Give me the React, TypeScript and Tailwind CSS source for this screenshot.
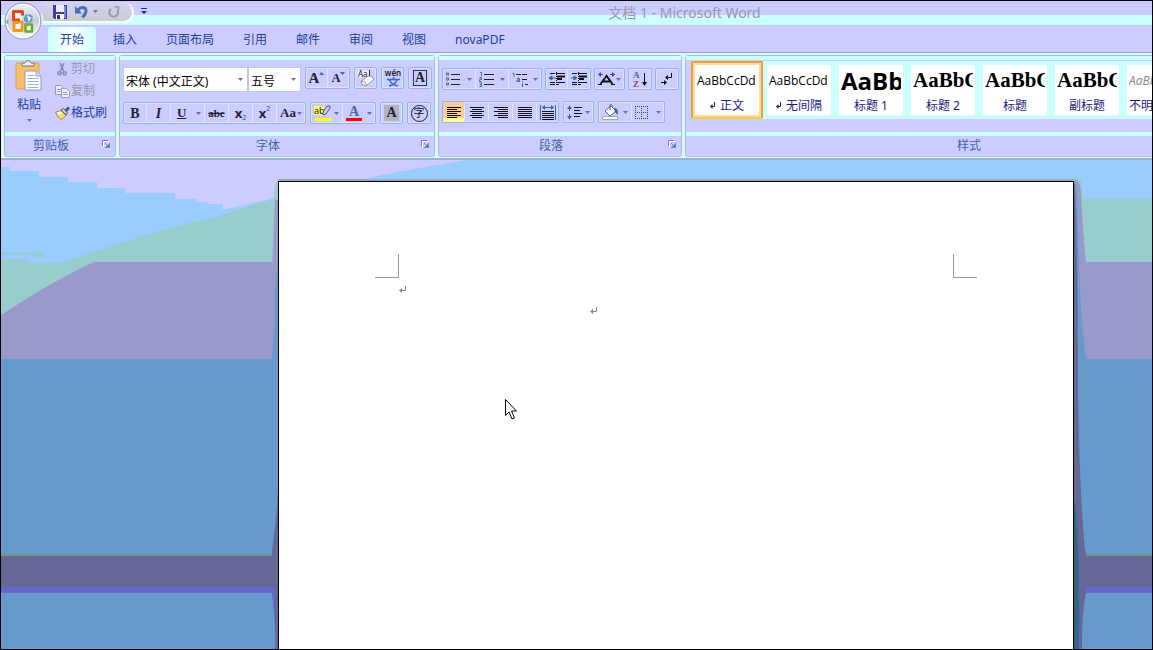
import React from 'react';

interface ToolProps {
  label: string;
  width: string;
  drop?: boolean;
  active?: boolean;
  children: React.ReactNode;
}

const Arrow = () => (
  <svg width="5" height="3" viewBox="0 0 5 3" className="shrink-0" aria-hidden="true">
    <path d="M0 0h5L2.500 3z" fill="#6672a8" />
  </svg>
);

const Tool: React.FC<ToolProps> = ({ label, width, drop, active, children }) => (
  <button
    type="button"
    aria-label={label}
    className={`flex h-full items-center ${width} ${
      active ? 'bg-linear-to-b from-[#ffcc99] from-80% to-[#ffff99] to-80%' : ''
    } ${drop ? 'justify-between px-[3px]' : 'justify-center'}`}
  >
    {children}
    {drop && <Arrow />}
  </button>
);

const ToolGroup: React.FC<{ children: React.ReactNode }> = ({ children }) => (
  <div className="flex h-[22px] shrink-0 divide-x divide-[#dde6ff] rounded-[2px] border border-[#99b3dd] shadow-[inset_0_0_0_1px_#d5e4ff]">
    {children}
  </div>
);

const Launcher: React.FC<{ label: string }> = ({ label }) => (
  <button type="button" aria-label={label} className="absolute top-[4px] right-[5px]">
    <svg width="8" height="8" viewBox="0 0 8 8" fill="none">
      <path d="M.5 6V.5H6" stroke="#6688bb" />
      <path d="M7.500 3v4.500H3M3 3l3 3" stroke="#6688bb" />
      <path d="M1.500 7V1.500H7" stroke="#fff" />
      <path d="M4 7l3-3v3z" fill="#557799" />
    </svg>
  </button>
);

interface PanelProps {
  title: string;
  width: string;
  launcher?: boolean;
  children: React.ReactNode;
}

const Panel: React.FC<PanelProps> = ({ title, width, launcher = true, children }) => (
  <section
    aria-label={title}
    className={`flex shrink-0 flex-col rounded-[3px] border border-[#a5bfdd] bg-[#ccccff] ${width}`}
  >
    <div className="h-[76px] border-t-4 border-[#ccffff]">{children}</div>
    <div
      className={`relative h-[24px] border-t-4 border-[#ccffff] text-center text-[12px] leading-[20px] text-[#3a66a8] ${
        launcher ? 'pr-[18px]' : ''
      }`}
    >
      {title}
      {launcher && <Launcher label={`${title}选项`} />}
    </div>
  </section>
);

/* ---------- icons ---------- */

const OfficeLogo = () => (
  <svg width="38" height="38" viewBox="0 0 38 38" className="block">
    <defs>
      <linearGradient id="orb" x1="0" y1="0" x2="0" y2="1">
        <stop offset="0" stopColor="#f2f2ff" />
        <stop offset=".5" stopColor="#ccccdd" />
        <stop offset="1" stopColor="#ffffff" />
      </linearGradient>
    </defs>
    <circle cx="19" cy="19" r="18" fill="url(#orb)" stroke="#8f9bb8" />
    <circle cx="19" cy="19" r="16.500" fill="none" stroke="#fff" />
    <path d="M9 9h9v9H9z" fill="#fff4ee" />
    <path d="M16 18H9.500V9.500H18.500v4" fill="none" stroke="#dd4a1c" strokeWidth="3" strokeLinejoin="round" />
    <path d="M21.500 13.500h6v6h-6z" fill="#eef6ff" stroke="#4488cc" strokeWidth="2" strokeDasharray="2 1" />
    <path d="M10 20.500h8v8h-8z" fill="#fff" stroke="#ee9a1c" strokeWidth="3" strokeLinejoin="round" />
    <path d="M14 21.500h3v3h-3z" fill="#fff" />
    <path d="M21.500 22.500h6.500v7h-6.500z" fill="#f4ffe8" stroke="#66aa33" strokeWidth="2.500" strokeLinejoin="round" />
    <path d="M20 15.500h4v3h-4z" fill="#5599dd" />
    <path d="M20 21.500h4v3h-4z" fill="#88aa44" />
    <path d="M2 20l2-3v5zM34 17h1M34 20h1" fill="#9999aa" stroke="#aaaabb" />
  </svg>
);

const SaveIcon = () => (
  <svg width="14" height="14" viewBox="0 0 14 14">
    <path d="M0 0h14v14H1.500L0 12.500z" fill="#3b3ba0" />
    <path d="M3 0h8v7H3z" fill="#e6eeff" />
    <path d="M11 1h2v12h-2z" fill="#7788cc" />
    <path d="M3 9h8v5H3z" fill="#fff" />
    <path d="M4 10h3v4H4z" fill="#333377" />
  </svg>
);

const UndoIcon = () => (
  <svg width="13" height="14" viewBox="0 0 13 14" fill="none">
    <path d="M3 5c3-4 8-3 8 1 0 3-2 4-3.500 6.500" stroke="#4a6cc0" strokeWidth="3" />
    <path d="M0 1v7.500h7z" fill="#4a6cc0" />
  </svg>
);

const RedoIcon = () => (
  <svg width="12" height="12" viewBox="0 0 12 12" fill="none" stroke="#9999aa" strokeWidth="2">
    <path d="M3 3a4.300 4.300 0 1 0 6.500 1.500" />
    <path d="M6.500 1h4v4" strokeWidth="1.500" />
  </svg>
);

const PasteIcon = () => (
  <svg width="28" height="31" viewBox="0 0 28 31">
    <rect x="1" y="3" width="23" height="26" rx="1.500" fill="#f9be68" stroke="#dd9f55" />
    <path d="M7 6V3h3c0-3 6-3 6 0h3v3z" fill="#eee" stroke="#777788" />
    <path d="M10 11h11l5 5v14H10z" fill="#fff" stroke="#8899bb" />
    <path d="M21 11v5h5" fill="#dde6ff" stroke="#8899bb" />
    <path d="M12.500 15.500h7M12.500 18.500h11M12.500 21.500h11M12.500 24.500h11M12.500 27.500h11" stroke="#99b0dd" />
  </svg>
);

const CutIcon = () => (
  <svg width="10" height="13" viewBox="0 0 10 13" fill="none" stroke="#7f88a8" strokeWidth="1.500">
    <path d="M3 0l3.500 8M7 0L3.500 8" />
    <circle cx="2.500" cy="10.300" r="1.600" />
    <circle cx="7.500" cy="10.300" r="1.600" />
  </svg>
);

const CopyIcon = () => (
  <svg width="15" height="13" viewBox="0 0 15 13" stroke="#9999bb">
    <path d="M.5.5h5l3 3v6h-8z" fill="#eeeeff" />
    <path d="M2 4.500h4M2 6.500h3" />
    <path d="M6.500 3.500h5l3 3v6h-8z" fill="#eeeeff" />
    <path d="M8 7.500h4M8 9.500h5" />
  </svg>
);

const BrushIcon = () => (
  <svg width="15" height="14" viewBox="0 0 15 14">
    <path d="M.5 6L6 4.500l5 5L6.500 13.500C4 12.500 1.500 9 .5 6z" fill="#f5e070" stroke="#998a4a" />
    <path d="M2 6.500l4-1 1.500 1.500-4 2z" fill="#ffffcc" />
    <path d="M6 4L8.500 2.500l4 4.500L11 9z" fill="#ccccd8" stroke="#555577" />
    <path d="M10 3.500L13 .5l2 1.500-3 4z" fill="#445588" />
  </svg>
);

const EraserIcon = () => (
  <svg width="17" height="18" viewBox="0 0 17 18">
    <path d="M.5 1.500h12v7H.5z" fill="#eef" />
    <text x="1" y="8" fontSize="8" fontFamily="Noto Sans" fill="#222">Aa</text>
    <path d="M12.500 1v6" stroke="#222" />
    <path d="M4 12.500L11 7l4 .5 1.500 3-7 6-4-.5z" fill="#fff" stroke="#8c99b4" />
    <path d="M4 12.500l4 .5 1.500 3" fill="none" stroke="#99a" />
  </svg>
);

const PhoneticIcon = () => (
  <svg width="20" height="20" viewBox="0 0 20 20">
    <text x="10" y="8" fontSize="8" fontWeight="600" textAnchor="middle" fontFamily="Noto Sans" fill="#222">wén</text>
    <path d="M10.500 9v2M4 11.500h13M6.500 12c1 3 4 5 8.500 6M14 12c-1 3-4 5-8 6" fill="none" stroke="#3b6cc0" strokeWidth="1.500" />
  </svg>
);

const BulletsIcon = () => (
  <svg width="14" height="14" viewBox="0 0 14 14">
    <path d="M.5 1h2v2h-2zM.5 6h2v2h-2zM.5 11h2v2h-2z" fill="#ccccff" stroke="#4a6a99" />
    <path d="M5 2.500h9M5 7.500h9M5 12.500h9" stroke="#222" />
  </svg>
);

const NumberingIcon = () => (
  <svg width="15" height="15" viewBox="0 0 15 15">
    <path d="M1 .5h1.500V4M.5 5.500h2v2h-2v2h2M.5 11h2v3.500h-2M1 12.700h1.500" fill="none" stroke="#4a6a99" />
    <path d="M5 2.500h10M5 7.500h10M5 12.500h10" stroke="#222" />
  </svg>
);

const MultilevelIcon = () => (
  <svg width="18" height="15" viewBox="0 0 18 15">
    <path d="M.5 1.500H2V5M5 6.500h2.500v3H5V8h2M10.500 11v4M10.500 9v1" fill="none" stroke="#4a6a99" />
    <path d="M4 2.500h12M10 7.500h6M13 12.500h3" stroke="#222" strokeDasharray="5 1" />
  </svg>
);

const IndentIcon = ({ flip }: { flip?: boolean }) => (
  <svg width="16" height="14" viewBox="0 0 16 14">
    <path d="M1 1.500h15M1 10.500h15M1 12.500h9" stroke="#111" strokeDasharray="5 1 9 1" />
    <path d="M8 4.500h8M8 7h5" stroke="#111" strokeWidth="2" />
    <path d="M7.500 0v14" stroke="#111" strokeDasharray="1 1" />
    <path d={flip ? 'M0 6h3M3 4L6 6 3 8z' : 'M3 6h4M3 4L0 6l3 2z'} fill="#336699" stroke="#336699" />
  </svg>
);

const ScaleIcon = () => (
  <svg width="17" height="14" viewBox="0 0 17 14" fill="none">
    <path d="M0 12.500h4M13 12.500h4" stroke="#111" />
    <path d="M2.500 12L8.500 4l6 8M5 9.500h7" stroke="#111" strokeWidth="2" />
    <path d="M1 2.500h4M12 2.500h4" stroke="#3344aa" />
    <path d="M3 0L0 2.500 3 5zM14 0l3 2.500L14 5z" fill="#3344aa" />
  </svg>
);

const SortIcon = () => (
  <svg width="15" height="18" viewBox="0 0 15 18">
    <text x="0" y="8" fontSize="9" fontWeight="bold" fontFamily="Liberation Serif" fill="#4466aa">A</text>
    <text x="0" y="17" fontSize="9" fontWeight="bold" fontFamily="Liberation Serif" fill="#aa4444">Z</text>
    <path d="M11.500 3v11" stroke="#111" />
    <path d="M9 12h5l-2.500 4z" fill="#111" />
  </svg>
);

const MarksIcon = () => (
  <svg width="12" height="13" viewBox="0 0 12 13">
    <path d="M10.500 0v4.500H6M0 9.500h5" fill="none" stroke="#111" />
    <path d="M7 2v5L4 4.500zM3 7v5l3-2.500z" fill="#111" />
  </svg>
);

const alignPaths = {
  left: 'M0 .5h14M0 2.500h10M0 4.500h14M0 6.500h10M0 8.500h14M0 10.500h10',
  center: 'M0 .5h14M2 2.500h10M0 4.500h14M2 6.500h10M0 8.500h14M2 10.500h10',
  right: 'M0 .5h14M4 2.500h10M0 4.500h14M4 6.500h10M0 8.500h14M4 10.500h10',
  justify: 'M0 .5h14M0 2.500h14M0 4.500h14M0 6.500h14M0 8.500h14M0 10.500h14',
};

const AlignIcon = ({ kind }: { kind: keyof typeof alignPaths }) => (
  <svg width="14" height="11" viewBox="0 0 14 11">
    <path d={alignPaths[kind]} stroke="#111" />
  </svg>
);

const DistributeIcon = () => (
  <svg width="16" height="15" viewBox="0 0 16 15">
    <path d="M.5 0v15M15.500 0v15M2 2.500h12" stroke="#336699" />
    <path d="M5 0v5L2 2.500zM11 0v5l3-2.500z" fill="#336699" />
    <path d="M2 6.500h12M2 8.500h12M2 10.500h12M2 12.500h12M2 14.500h12" stroke="#111" />
  </svg>
);

const SpacingIcon = () => (
  <svg width="15" height="15" viewBox="0 0 15 15">
    <path d="M2.500 2v4M2.500 9v4" stroke="#336699" />
    <path d="M0 4l2.500-3.500L5 4zM0 11l2.500 3.500L5 11z" fill="#336699" />
    <path d="M7 2.500h8M7 5.500h6M7 8.500h8M7 11.500h6" stroke="#111" />
  </svg>
);

const BucketIcon = () => (
  <svg width="17" height="16" viewBox="0 0 17 16">
    <path d="M3 7l6-5 5 5-6 5z" fill="#fff" stroke="#556688" />
    <path d="M8 6V1.500c0-2 3-1 2 1.500" fill="none" stroke="#556688" />
    <path d="M12 4c4 0 4 4 3.500 7L13 8z" fill="#335f99" />
    <path d="M.5 12.500h15v3H.5z" fill="#fff" stroke="#aaaa99" />
  </svg>
);

const BordersIcon = () => (
  <svg width="13" height="13" viewBox="0 0 13 13" fill="none" stroke="#445">
    <path d="M0 .5h13M0 6.500h13M.5 0v13M6.500 0v13M12.500 0v13M0 12.500h13" strokeDasharray="1 1" />
  </svg>
);

const HighlightIcon = () => (
  <svg width="18" height="18" viewBox="0 0 18 18">
    <path d="M0 2h10v9H0z" fill="#ffff66" />
    <text x="0" y="10" fontSize="9" fontFamily="Noto Sans" fill="#222">ab</text>
    <path d="M9 8l4-6h3v2l-4 6-3 1z" fill="#ccccdd" stroke="#555577" />
    <path d="M1 14h16v3H1z" fill="#ffff00" />
  </svg>
);

const FontColorIcon = () => (
  <svg width="17" height="18" viewBox="0 0 17 18">
    <text x="8" y="12" fontSize="14" fontWeight="bold" textAnchor="middle" fontFamily="Liberation Serif" fill="#4466aa">A</text>
    <path d="M0 14h16v3H0z" fill="#ff0000" />
  </svg>
);

const ParagraphMark = () => (
  <svg width="8" height="8" viewBox="0 0 8 8" aria-hidden="true">
    <path d="M6.500 0v4.500H2" fill="none" stroke="#888" />
    <path d="M3 2v5L0 4.500z" fill="#888" />
  </svg>
);

const MouseCursor = () => (
  <svg width="13" height="22" viewBox="0 0 13 22">
    <path d="M.5.5v16L4 13l3 7 2.500-1-3-7h5z" fill="#fff" stroke="#000" />
  </svg>
);

/* ---------- title bar and tabs ---------- */

const tabs = ['开始', '插入', '页面布局', '引用', '邮件', '审阅', '视图', 'novaPDF'];

const TitleBar = () => (
  <header className="relative flex h-[24px] shrink-0 bg-linear-to-b from-[#ccccff] from-[14px] to-[#ccffff] to-[14px]">
    <button
      type="button"
      aria-label="Office 按钮"
      className="absolute top-[1px] left-[3px] z-10 rounded-full"
    >
      <OfficeLogo />
    </button>
    <div className="mt-[1px] ml-[42px] flex h-[21px] w-[91px] shrink-0 items-center rounded-r-full border-r-2 border-b-2 border-white bg-linear-to-b from-[#d2d2f4] to-[#cccccc] pl-[10px]">
      <button type="button" aria-label="保存"><SaveIcon /></button>
      <button type="button" aria-label="撤销" className="ml-2 flex items-center gap-[5px]">
        <UndoIcon />
        <Arrow />
      </button>
      <button type="button" aria-label="恢复" className="ml-[10px]"><RedoIcon /></button>
    </div>
    <button type="button" aria-label="自定义快速访问工具栏" className="ml-[7px] flex h-[20px] items-center">
      <svg width="6" height="6" viewBox="0 0 6 6">
        <path d="M0 0h6v1H0zM0 3h6L3 6z" fill="#223377" />
      </svg>
    </button>
    <h1 className="flex-1 pl-[70px] text-center text-[14px] leading-[24px] text-[#9999a5]">
      文档 1 - Microsoft Word
    </h1>
  </header>
);

const Tabs = () => (
  <nav className="flex h-[28px] shrink-0 items-end gap-[5px] border-t border-b border-[#88a8dd] border-t-[#bbccee] pl-[47px]">
    {tabs.map((tab, i) => (
      <button
        key={tab}
        type="button"
        className={`h-[25px] rounded-t-[3px] px-3 text-[12px] leading-[24px] text-[#223f99] ${
          i === 0 ? 'bg-linear-to-r from-[#ccffff] via-white to-[#ccffff]' : ''
        }`}
      >
        {tab}
      </button>
    ))}
  </nav>
);

/* ---------- ribbon panels ---------- */

const clipboardItems = [
  { label: '剪切', icon: <CutIcon />, color: 'text-[#9999aa]' },
  { label: '复制', icon: <CopyIcon />, color: 'text-[#9999aa]' },
  { label: '格式刷', icon: <BrushIcon />, color: 'text-[#223f99]' },
];

const ClipboardPanel = () => (
  <Panel title="剪贴板" width="w-[112px]">
    <div className="flex">
      <button
        type="button"
        className="flex w-[48px] flex-col items-center text-[12px] leading-[28px] text-[#223f99]"
      >
        <PasteIcon />
        粘贴
        <Arrow />
      </button>
      <div className="flex flex-col">
        {clipboardItems.map((item) => (
          <button
            key={item.label}
            type="button"
            className={`flex h-[22px] items-start text-[12px] leading-[18px] ${item.color}`}
          >
            <span className="flex h-[18px] w-[18px] items-center justify-center">{item.icon}</span>
            {item.label}
          </button>
        ))}
      </div>
    </div>
  </Panel>
);

const Combo = ({ label, value, width }: { label: string; value: string; width: string }) => (
  <div className={`relative h-[25px] border border-[#b8cce8] bg-white ${width}`}>
    <select
      aria-label={label}
      className="h-[21px] w-full appearance-none bg-transparent pl-[2px] text-[12px] leading-[20px] text-black"
    >
      <option>{value}</option>
    </select>
    <div className="pointer-events-none absolute inset-y-0 right-[4px] flex items-center">
      <Arrow />
    </div>
  </div>
);

const serif = 'font-["Liberation_Serif",serif] font-bold text-[#222233]';
const scriptBase = 'font-["Noto_Sans",sans-serif] text-[13px] font-bold leading-[18px] text-[#222233]';

const FontPanel = () => (
  <Panel title="字体" width="w-[316px]">
    <div className="flex flex-col gap-[10px] pt-[7px] pl-[3px]">
      <div className="flex h-[25px] gap-1">
        <div className="flex">
          <Combo label="字体" value="宋体 (中文正文)" width="w-[125px]" />
          <Combo label="字号" value="五号" width="w-[53px]" />
        </div>
        <ToolGroup>
          <Tool label="增大字体" width="w-[22px]">
            <span className={`${serif} text-[15px] leading-[20px]`}>A</span>
            <svg width="5" height="12" viewBox="0 0 5 12"><path d="M0 3h5L2.500 0z" fill="#4466aa" /></svg>
          </Tool>
          <Tool label="缩小字体" width="w-[21px]">
            <span className={`${serif} text-[12px] leading-[20px]`}>A</span>
            <svg width="5" height="12" viewBox="0 0 5 12"><path d="M0 0h5L2.500 3z" fill="#4466aa" /></svg>
          </Tool>
        </ToolGroup>
        <ToolGroup><Tool label="清除格式" width="w-[21px]"><EraserIcon /></Tool></ToolGroup>
        <ToolGroup><Tool label="拼音指南" width="w-[21px]"><PhoneticIcon /></Tool></ToolGroup>
        <ToolGroup>
          <Tool label="字符边框" width="w-[22px]">
            <span className={`${serif} border border-[#333355] px-[1px] text-[14px] leading-[14px]`}>A</span>
          </Tool>
        </ToolGroup>
      </div>
      <div className="flex gap-1">
        <ToolGroup>
          <Tool label="加粗" width="w-[23px]"><span className={`${serif} text-[14px]`}>B</span></Tool>
          <Tool label="倾斜" width="w-[24px]"><span className={`${serif} text-[14px] italic`}>I</span></Tool>
          <Tool label="下划线" width="w-[34px]" drop>
            <span className={`${serif} pl-[3px] text-[13px] underline`}>U</span>
          </Tool>
          <Tool label="删除线" width="w-[24px]"><span className={`${serif} text-[11px] line-through`}>abc</span></Tool>
          <Tool label="下标" width="w-[24px]">
            <span className={scriptBase}>x</span>
            <span className="self-end text-[7px] leading-[10px] text-[#3355aa]">2</span>
          </Tool>
          <Tool label="上标" width="w-[24px]">
            <span className={scriptBase}>x</span>
            <span className="self-start text-[7px] leading-[12px] text-[#3355aa]">2</span>
          </Tool>
          <Tool label="更改大小写" width="w-[28px]" drop><span className={`${serif} text-[13px]`}>Aa</span></Tool>
        </ToolGroup>
        <ToolGroup>
          <Tool label="突出显示" width="w-[32px]" drop><HighlightIcon /></Tool>
          <Tool label="字体颜色" width="w-[32px]" drop><FontColorIcon /></Tool>
        </ToolGroup>
        <ToolGroup>
          <Tool label="字符底纹" width="w-[21px]">
            <span className={`${serif} bg-[#b3b3bb] px-[2px] text-[14px] leading-[16px]`}>A</span>
          </Tool>
        </ToolGroup>
        <ToolGroup>
          <Tool label="带圈字符" width="w-[22px]">
            <span className="flex size-[17px] items-center justify-center rounded-full border border-[#222] text-[11px] leading-[12px] text-[#111]">
              字
            </span>
          </Tool>
        </ToolGroup>
      </div>
    </div>
  </Panel>
);

const ParagraphPanel = () => (
  <Panel title="段落" width="w-[244px]">
    <div className="flex flex-col gap-[11px] pt-2 pl-[3px]">
      <div className="flex gap-[3px]">
        <ToolGroup>
          <Tool label="项目符号" width="w-[33px]" drop><BulletsIcon /></Tool>
          <Tool label="编号" width="w-[33px]" drop><NumberingIcon /></Tool>
          <Tool label="多级列表" width="w-[32px]" drop><MultilevelIcon /></Tool>
        </ToolGroup>
        <ToolGroup>
          <Tool label="减少缩进量" width="w-[22px]"><IndentIcon /></Tool>
          <Tool label="增加缩进量" width="w-[22px]"><IndentIcon flip /></Tool>
        </ToolGroup>
        <ToolGroup><Tool label="中文版式" width="w-[29px]" drop><ScaleIcon /></Tool></ToolGroup>
        <ToolGroup><Tool label="排序" width="w-[22px]"><SortIcon /></Tool></ToolGroup>
        <ToolGroup><Tool label="显示编辑标记" width="w-[22px]"><MarksIcon /></Tool></ToolGroup>
      </div>
      <div className="flex gap-1">
        <ToolGroup>
          <Tool label="左对齐" width="w-[22px]" active><AlignIcon kind="left" /></Tool>
          <Tool label="居中" width="w-[24px]"><AlignIcon kind="center" /></Tool>
          <Tool label="右对齐" width="w-[24px]"><AlignIcon kind="right" /></Tool>
          <Tool label="两端对齐" width="w-[24px]"><AlignIcon kind="justify" /></Tool>
          <Tool label="分散对齐" width="w-[21px]"><DistributeIcon /></Tool>
        </ToolGroup>
        <ToolGroup><Tool label="行距" width="w-[29px]" drop><SpacingIcon /></Tool></ToolGroup>
        <ToolGroup>
          <Tool label="底纹" width="w-[33px]" drop><BucketIcon /></Tool>
          <Tool label="边框" width="w-[32px]" drop><BordersIcon /></Tool>
        </ToolGroup>
      </div>
    </div>
  </Panel>
);

const calibri = 'font-["Open_Sans",sans-serif] text-[12px] text-black';
const cambria = 'font-["Liberation_Serif",serif] text-[21px] font-bold text-black';

const styles = [
  { name: '正文', sample: 'AaBbCcDd', font: calibri, mark: true },
  { name: '无间隔', sample: 'AaBbCcDd', font: calibri, mark: true },
  { name: '标题 1', sample: 'AaBb', font: 'font-["Open_Sans",sans-serif] text-[24px] font-bold text-black' },
  { name: '标题 2', sample: 'AaBbC', font: cambria },
  { name: '标题', sample: 'AaBbC', font: cambria },
  { name: '副标题', sample: 'AaBbC', font: cambria },
  { name: '不明显强调', sample: 'AaBbCcDd', font: 'font-["Open_Sans",sans-serif] text-[12px] italic text-[#888888]' },
];

const StylesPanel = () => (
  <Panel title="样式" width="min-w-[568px] grow" launcher={false}>
    <div className="mt-[1px] ml-[5px] flex h-[58px] overflow-hidden bg-[#ccffff]">
      {styles.map((style, i) => (
        <button
          key={style.name}
          type="button"
          className={`w-[72px] shrink-0 ${
            i === 0
              ? 'rounded-[2px] border-2 border-[#e8a040] border-b-[#ffcc44] bg-[#ffdd99] p-[2px]'
              : 'p-1'
          }`}
        >
          <div className="flex h-[50px] flex-col items-center overflow-hidden bg-white">
            <span className={`flex h-[31px] w-[60px] items-center overflow-hidden ${style.font}`}>
              {style.sample}
            </span>
            <span className="flex h-[19px] items-center gap-[5px] text-[12px] leading-[18px] whitespace-nowrap text-[#1a1a80]">
              {style.mark && (
                <svg width="5" height="7" viewBox="0 0 5 7">
                  <path d="M4.500 0v4.500H1" fill="none" stroke="#1a1a80" />
                  <path d="M2.500 2v5L0 4.500z" fill="#1a1a80" />
                </svg>
              )}
              {style.name}
            </span>
          </div>
        </button>
      ))}
    </div>
  </Panel>
);

/* ---------- document area ---------- */

const Hills = () => (
  <svg width="472" height="160" viewBox="0 0 472 160" className="absolute top-0 left-0">
    <path d="M0 100h97C64 115 32 134 0 155z" fill="#99cccc" />
    <path
      d="M0 0H472C400 11 330 27 272 39.500 236 50 210 60 190 63 150 72 110 87 80 96L62 103H30L24 99H0z"
      fill="#99ccff"
    />
    <path d="M0 92.500h43v5H33l-2-3H0zM182 64l24-4v3l-20 3z" fill="#99cccc" />
    <path
      d="M0 0H467C430 6 395 12 367 18L273 38 222 50V44H206V42H195V39H174V33H124V28H96V22H67V17H38V11H9V7H0z"
      fill="#ccccff"
    />
  </svg>
);

const LeftShadow = () => (
  <svg width="6" viewBox="0 0 6 489" preserveAspectRatio="none" className="h-[489px] shrink-0">
    <path d="M6 19C3 22 3 30 2 40L0 103H6z" fill="#99cccc" />
    <path d="M6 40H3L0 110V199H6z" fill="#9999cc" />
    <path d="M6 99L3 130V160L0 199V394H6z" fill="#6699cc" />
    <path d="M6 330C4 370 0 385 0 396V430C2 450 4 470 3 489H6z" fill="#666699" />
    <path d="M0 427V433L3 460V430z" fill="#6666cc" />
  </svg>
);

const RightShadow = () => (
  <svg width="12" viewBox="0 0 12 489" preserveAspectRatio="none" className="h-[489px] shrink-0">
    <path d="M0 17C8 17 9 22 9 40L12 103H0z" fill="#99cccc" />
    <path d="M0 20C5 20 7 25 7 35C8 60 11 90 12 102V199H0z" fill="#9999cc" />
    <path d="M0 21C4 24 4 60 5 100C6 150 10 180 12 199V394H0z" fill="#6699cc" />
    <path d="M0 22C2 22 4 140 4 230C5 300 8 370 12 395V432C8 455 8 470 8 489H0z" fill="#666699" />
    <path d="M0 340C3 345 6 400 5 489H0z" fill="#336699" />
    <path d="M0 340C2 360 3 400 3 430L1 489H0z" fill="#336666" />
    <path d="M12 427V433L11 438z" fill="#6666cc" />
  </svg>
);

const Page = () => (
  <main className="relative mt-[21px] flex-1 border border-b-0 border-black bg-white shadow-[0_-2px_0_#99aabb]">
    <div className="flex justify-between px-[96px] pt-[72px]">
      <div className="size-[24px] border-r border-b border-[#999]" />
      <div className="size-[24px] border-b border-l border-[#999]" />
    </div>
    <p className="pt-[8px] pl-[120px]"><ParagraphMark /></p>
    <p className="pt-[13px] pl-[311px]"><ParagraphMark /></p>
    <div className="absolute top-[217px] left-[226px]"><MouseCursor /></div>
  </main>
);

const bands =
  'bg-[linear-gradient(#99ccff_39px,#99cccc_39px_102px,#9999cc_102px_199px,#6699cc_199px_393px,#669999_393px_396px,#666699_396px_427px,#6666cc_427px_433px,#6699cc_433px)]';

const App: React.FC = () => (
  <div className='flex h-screen flex-col overflow-hidden border border-black bg-[#ccccff] font-["Noto_Sans","Noto_Sans_CJK_SC",sans-serif]'>
    <TitleBar />
    <Tabs />
    <div className="flex h-[107px] shrink-0 gap-[3px] overflow-hidden border-b-2 border-[#99b3cc] bg-[#dff6ff] pt-[2px] pb-[1px] pl-[3px]">
      <ClipboardPanel />
      <FontPanel />
      <ParagraphPanel />
      <StylesPanel />
    </div>
    <div className={`relative flex flex-1 overflow-hidden ${bands}`}>
      <Hills />
      <div className="relative flex flex-1 pr-[66px] pl-[271px]">
        <LeftShadow />
        <Page />
        <RightShadow />
      </div>
    </div>
  </div>
);

export default App;
